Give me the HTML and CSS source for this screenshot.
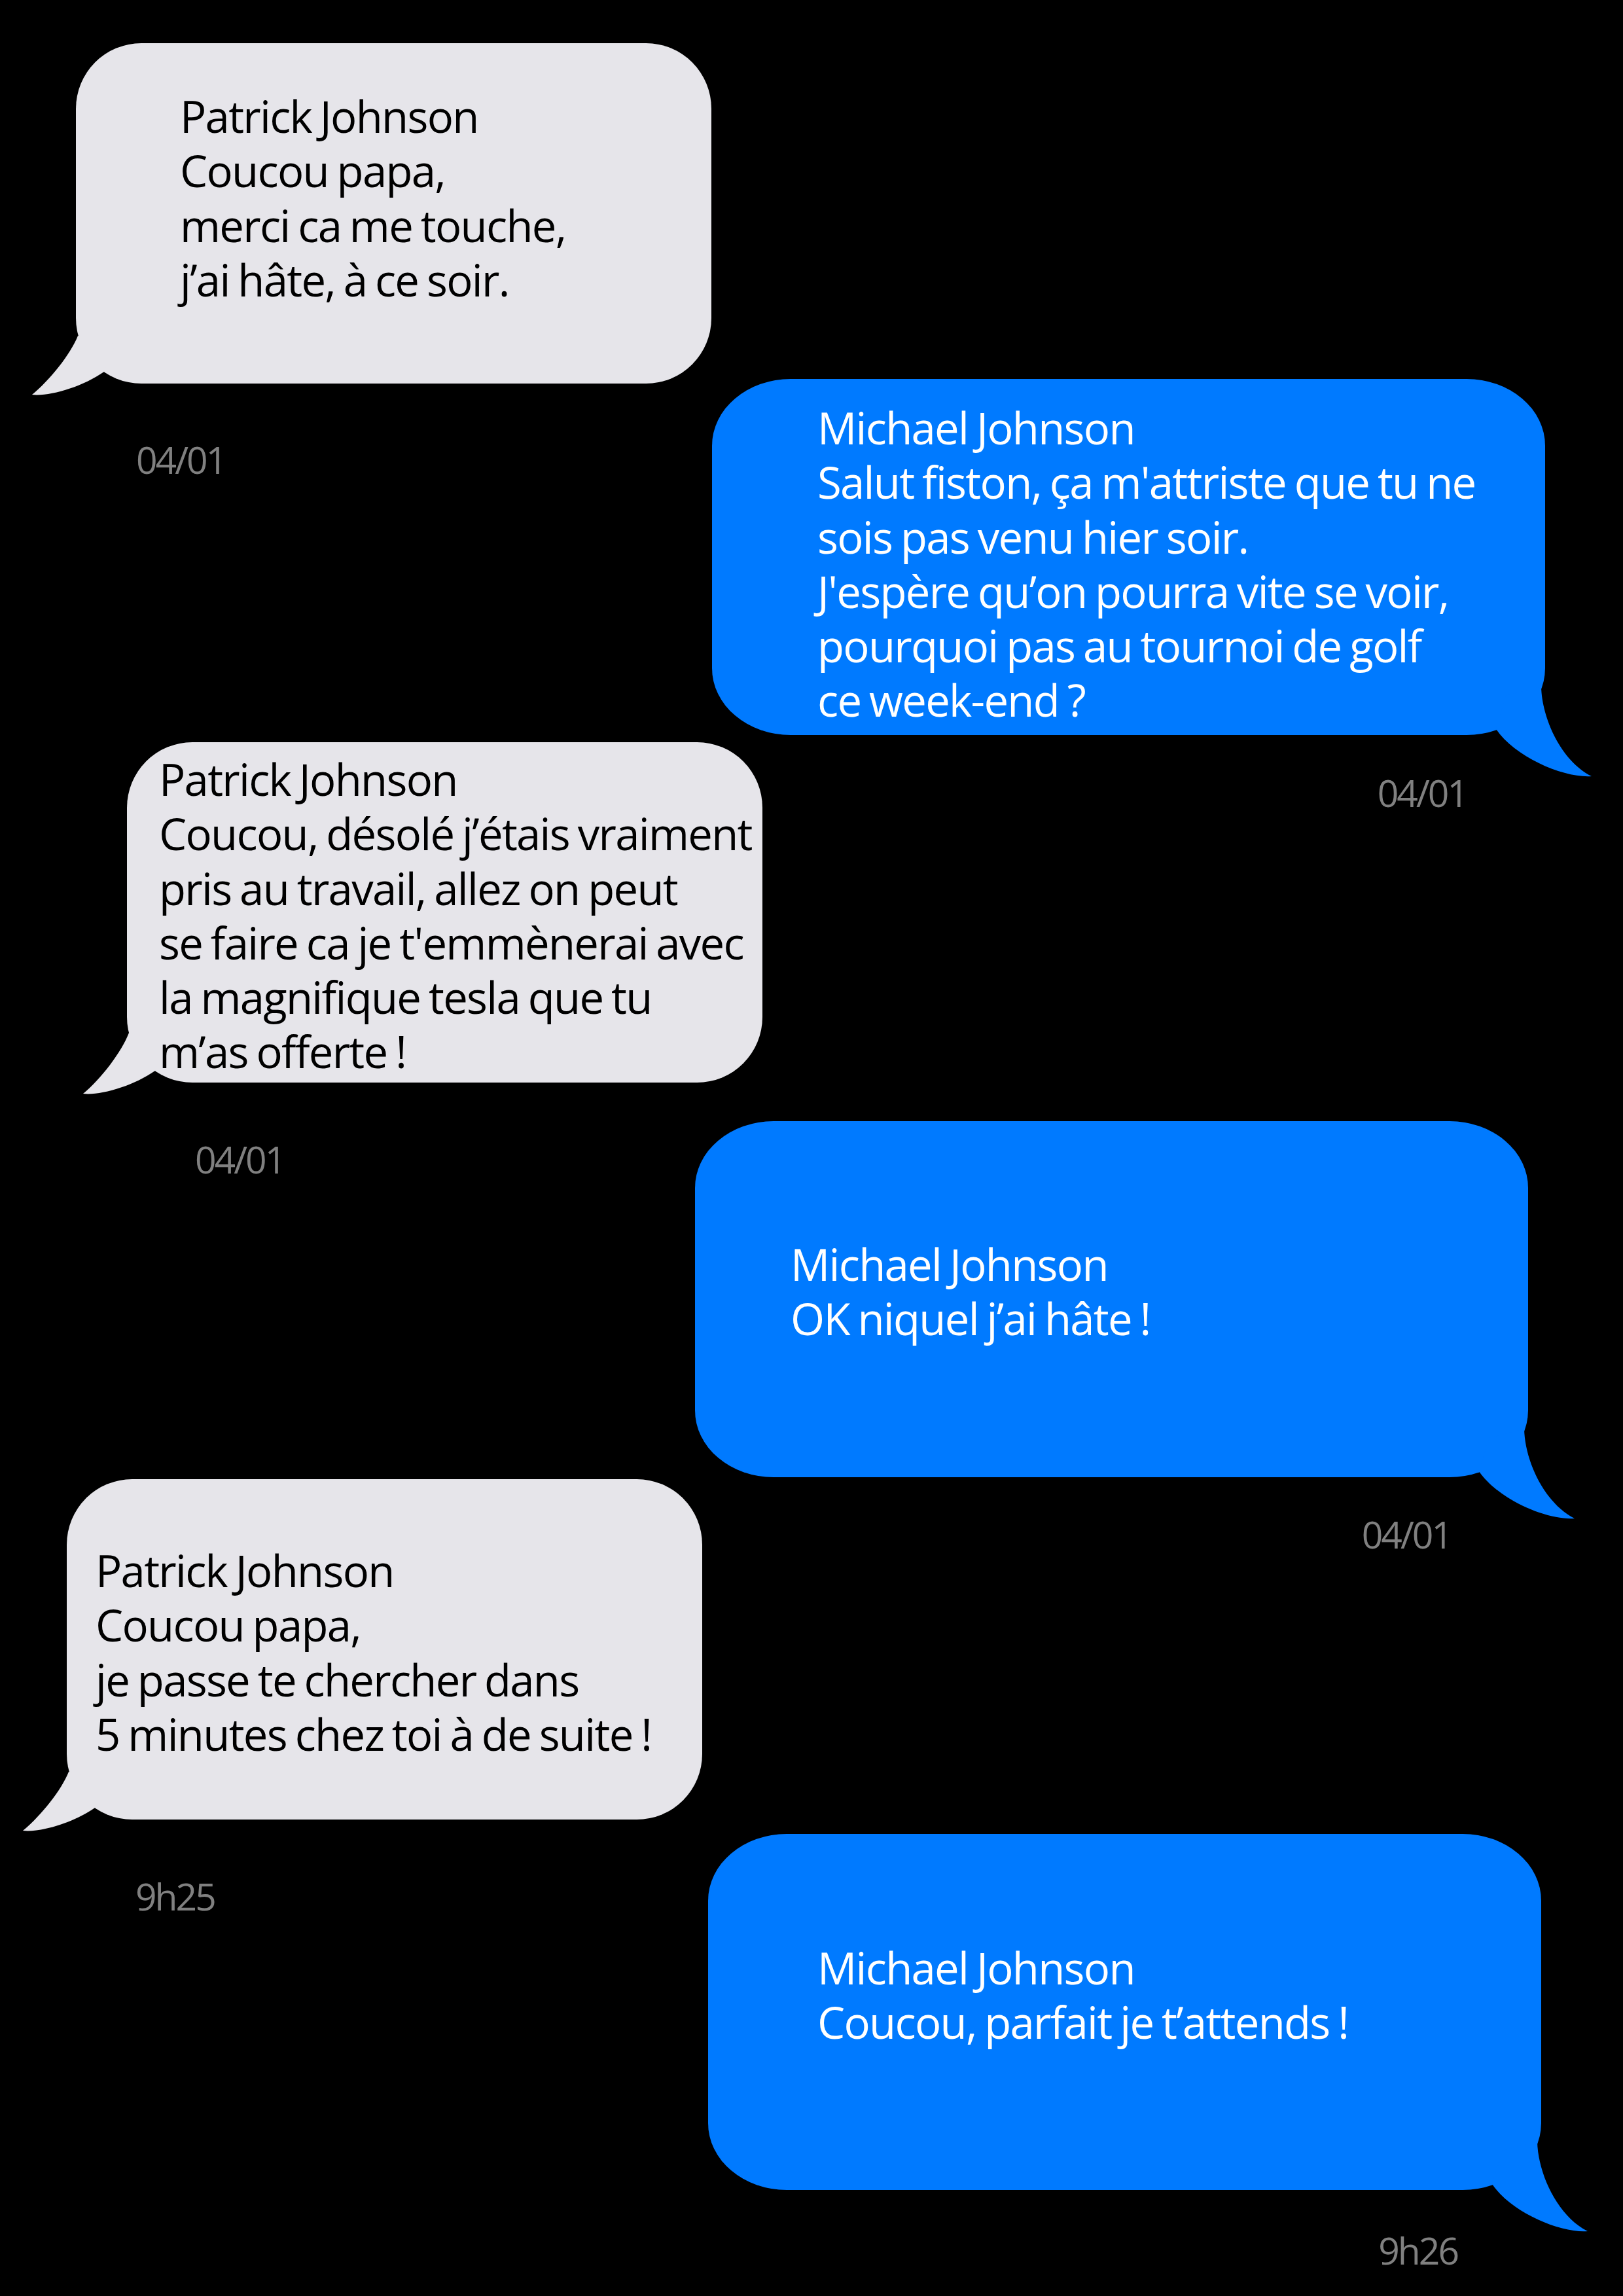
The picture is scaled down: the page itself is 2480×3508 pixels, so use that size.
FILE: index.html
```html
<!DOCTYPE html>
<html lang="fr">
<head>
<meta charset="utf-8">
<title>Messages</title>
<link rel="stylesheet" href="styles.css">
</head>
<body>
<main class="chat">

  <div class="msg in m1">
    <div class="bubble gray">
      <svg class="tail tail-in" viewBox="-80 -90 140 120" aria-hidden="true"><path d="M3,-73 C-8,-45 -40,-5 -67,17 C-40,20 10,5 43,-18 L60,-60 Z"/></svg>
      <p class="text">Patrick Johnson<br>Coucou papa,<br>merci ca me touche,<br>j’ai hâte, à ce soir.</p>
    </div>
    <div class="time">04/01</div>
  </div>

  <div class="msg out m2">
    <div class="bubble blue">
      <svg class="tail tail-out" viewBox="-90 -90 170 170" aria-hidden="true"><path d="M-6,-74 C-5,-25 25,40 71,63 C30,66 -45,35 -75,-9 L-60,-60 Z"/></svg>
      <p class="text">Michael Johnson<br>Salut fiston, ça m'attriste que tu ne<br>sois pas venu hier soir.<br>J'espère qu’on pourra vite se voir,<br>pourquoi pas au tournoi de golf<br>ce week-end ?</p>
    </div>
    <div class="time">04/01</div>
  </div>

  <div class="msg in m3">
    <div class="bubble gray">
      <svg class="tail tail-in" viewBox="-80 -90 140 120" aria-hidden="true"><path d="M3,-76 C-8,-47 -40,-5 -67,17 C-40,20 10,5 43,-18 L60,-60 Z"/></svg>
      <p class="text">Patrick Johnson<br>Coucou, désolé j’étais vraiment<br>pris au travail, allez on peut<br>se faire ca je t'emmènerai avec<br>la magnifique tesla que tu<br>m’as offerte !</p>
    </div>
    <div class="time">04/01</div>
  </div>

  <div class="msg out m4">
    <div class="bubble blue">
      <svg class="tail tail-out" viewBox="-90 -90 170 170" aria-hidden="true"><path d="M-6,-74 C-5,-25 25,40 71,63 C30,66 -45,35 -75,-9 L-60,-60 Z"/></svg>
      <p class="text">Michael Johnson<br>OK niquel j’ai hâte !</p>
    </div>
    <div class="time">04/01</div>
  </div>

  <div class="msg in m5">
    <div class="bubble gray">
      <svg class="tail tail-in" viewBox="-80 -90 140 120" aria-hidden="true"><path d="M3,-73 C-8,-45 -40,-5 -67,17 C-40,20 10,5 43,-18 L60,-60 Z"/></svg>
      <p class="text">Patrick Johnson<br>Coucou papa,<br>je passe te chercher dans<br>5 minutes chez toi à de suite !</p>
    </div>
    <div class="time">9h25</div>
  </div>

  <div class="msg out m6">
    <div class="bubble blue">
      <svg class="tail tail-out" viewBox="-90 -90 170 170" aria-hidden="true"><path d="M-6,-74 C-5,-25 25,40 71,63 C30,66 -45,35 -75,-9 L-60,-60 Z"/></svg>
      <p class="text">Michael Johnson<br>Coucou, parfait je t’attends !</p>
    </div>
    <div class="time">9h26</div>
  </div>

</main>
</body>
</html>
```

FILE: styles.css
```css
html, body {
  margin: 0;
  padding: 0;
  background: #000;
}

body {
  width: 2480px;
  height: 3508px;
  overflow: hidden;
  font-family: "Open Sans", "Noto Sans", sans-serif;
}

.chat {
  display: flex;
  flex-direction: column;
  align-items: flex-start;
}

.msg {
  display: flex;
  flex-direction: column;
}

.bubble {
  position: relative;
  box-sizing: border-box;
}

.gray {
  width: 971px;
  height: 520px;
  background: #e6e5ea;
  border-radius: 100px;
  color: #000;
}

.blue {
  width: 1273px;
  height: 544px;
  background: #007aff;
  border-radius: 120px / 102px;
  color: #fff;
}

.tail {
  position: absolute;
  overflow: visible;
}

.tail-in {
  left: -80px;
  bottom: -30px;
  width: 140px;
  height: 120px;
}

.tail-out {
  right: -80px;
  bottom: -80px;
  width: 170px;
  height: 170px;
}

.gray .tail path { fill: #e6e5ea; }
.blue .tail path { fill: #007aff; }

.text {
  position: relative;
  margin: 0;
  font-size: 67px;
  line-height: 83.3px;
  letter-spacing: -1.7px;
  word-spacing: -3px;
  white-space: nowrap;
}

.time {
  font-size: 57px;
  line-height: 64px;
  color: #808080;
  letter-spacing: -3px;
  white-space: nowrap;
}

.in .time { text-align: left; }
.out .time { text-align: right; }

/* message 1 */
.m1 { margin: 66px 0 0 116px; }
.m1 .bubble { padding: 70px 0 0 159px; }
.m1 .time { margin-top: 84px; padding-left: 92px; }

/* message 2 */
.m2 { margin: -155px 0 0 1088px; }
.m2 .bubble { padding: 33px 0 0 161px; }
.m2 .time { margin-top: 56px; padding-right: 120px; }

/* message 3 */
.m3 { margin: -109px 0 0 194px; }
.m3 .bubble { padding: 15px 0 0 49px; }
.m3 .time { margin-top: 85px; padding-left: 104px; }

/* message 4 */
.m4 { margin: -90px 0 0 1062px; }
.m4 .bubble { padding: 177px 0 0 146px; }
.m4 .time { margin-top: 55px; padding-right: 118px; }

/* message 5 */
.m5 { margin: -116px 0 0 102px; }
.m5 .bubble { padding: 98px 0 0 44px; }
.m5 .time { margin-top: 85px; padding-left: 105px; }

/* message 6 */
.m6 { margin: -127px 0 0 1082px; }
.m6 .bubble { padding: 163px 0 0 167px; }
.m6 .time { margin-top: 60px; padding-right: 128px; }
```
